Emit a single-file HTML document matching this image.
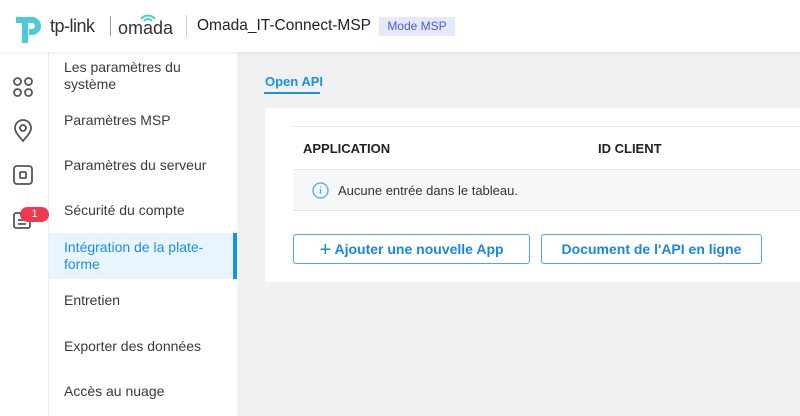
<!DOCTYPE html>
<html><head><meta charset="utf-8"><style>
*{margin:0;padding:0;box-sizing:border-box}
body{width:800px;height:416px;overflow:hidden;background:#f0f1f3;font-family:"Liberation Sans",sans-serif;position:relative;color:#333}
.hdr{position:absolute;left:0;top:0;width:800px;height:52px;background:#fff;box-shadow:0 2px 4px rgba(0,0,0,.06);z-index:2}
.rail{position:absolute;left:0;top:52px;width:49px;height:364px;background:#fff;border-right:1px solid #eee}
.menu{position:absolute;left:49px;top:52px;width:188px;height:364px;background:#fff}
.mi{position:absolute;left:15px;font-size:14px;color:#3a3a3a;line-height:17px}
.act{position:absolute;left:49px;top:233px;width:188px;height:46px;background:#e8f4fe;border-right:4px solid #1a8fe8}
.card{position:absolute;left:265px;top:108px;width:535px;height:174px;background:#fff}
.btn{position:absolute;top:234px;height:30px;border:1px solid #4aa8ef;border-radius:3px;background:#fff;color:#1a86dc;font-weight:bold;font-size:14px;line-height:28px;text-align:center}
</style></head><body>
<div class="hdr">
<svg style="position:absolute;left:14px;top:13px" width="32" height="32" viewBox="0 0 32 32"><path d="M8 4h10a9 9 0 0 1 0 18h-3v-6h3a3 3 0 0 0 0-6h-4v20h-6V10H2V4z" fill="#4acbd6"/></svg>
<div style="position:absolute;left:50px;top:16px;font-size:18px;color:#333;letter-spacing:-0.5px">tp-link</div>
<div style="position:absolute;left:110px;top:16px;width:1px;height:20px;background:#999"></div>
<div style="position:absolute;left:118px;top:18px;font-size:18px;color:#333">omada</div>
<svg style="position:absolute;left:138px;top:12px" width="20" height="10" viewBox="0 0 20 10"><path d="M3 7a9 9 0 0 1 14 0M6 9a5 5 0 0 1 8 0" stroke="#4acbd6" stroke-width="2" fill="none"/></svg>
<div style="position:absolute;left:186px;top:15px;width:1px;height:22px;background:#ccc"></div>
<div style="position:absolute;left:197px;top:17px;font-size:15.5px;color:#222;white-space:nowrap">Omada_IT-Connect-MSP</div>
<div style="position:absolute;left:379px;top:17px;width:76px;height:19px;background:#e6e9fb;color:#4b57d6;font-size:12px;line-height:19px;text-align:center">Mode MSP</div>
</div>
<div class="rail">
<svg style="position:absolute;left:12px;top:24px" width="22" height="22" viewBox="0 0 22 22" fill="none" stroke="#555" stroke-width="1.8"><rect x="2" y="2" width="7" height="7" rx="3.5"/><rect x="13" y="2" width="7" height="7" rx="3.5"/><rect x="2" y="13" width="7" height="7" rx="3.5"/><rect x="13" y="13" width="7" height="7" rx="3.5"/></svg>
<svg style="position:absolute;left:12px;top:67px" width="22" height="24" viewBox="0 0 22 24" fill="none" stroke="#555" stroke-width="1.8"><path d="M11 22c-5-6-8-9-8-13a8 8 0 0 1 16 0c0 4-3 7-8 13z"/><circle cx="11" cy="9" r="3"/></svg>
<svg style="position:absolute;left:12px;top:112px" width="22" height="22" viewBox="0 0 22 22" fill="none" stroke="#555" stroke-width="1.8"><rect x="2" y="2" width="18" height="18" rx="3"/><rect x="8" y="8" width="6" height="6" rx="1"/></svg>
<svg style="position:absolute;left:12px;top:158px" width="22" height="20" viewBox="0 0 22 20" fill="none" stroke="#555" stroke-width="1.8"><rect x="2" y="3" width="16" height="15" rx="2"/><path d="M6 10h8M6 14h8"/></svg>
<div style="position:absolute;left:20px;top:155px;width:29px;height:15px;background:#f0384e;border-radius:8px;color:#fff;font-size:11px;text-align:center;line-height:15px">1</div>
</div>
<div class="menu"></div>
<div class="act"></div>
<div class="mi" style="left:64px;top:59px">Les paramètres du<br>système</div>
<div class="mi" style="left:64px;top:112px">Paramètres MSP</div>
<div class="mi" style="left:64px;top:157px">Paramètres du serveur</div>
<div class="mi" style="left:64px;top:202px">Sécurité du compte</div>
<div class="mi" style="left:64px;top:239px;color:#1a8fe8">Intégration de la plate-<br>forme</div>
<div class="mi" style="left:64px;top:292px">Entretien</div>
<div class="mi" style="left:64px;top:338px">Exporter des données</div>
<div class="mi" style="left:64px;top:383px">Accès au nuage</div>
<div style="position:absolute;left:265px;top:74px;font-size:13px;font-weight:bold;color:#1a8fe8">Open API</div>
<div style="position:absolute;left:264px;top:92px;width:56px;height:2px;background:#1a8fe8"></div>
<div class="card"></div>
<div style="position:absolute;left:293px;top:126px;width:507px;height:1px;background:#e6e6e6"></div>
<div style="position:absolute;left:303px;top:141px;font-size:13px;font-weight:bold;color:#222">APPLICATION</div>
<div style="position:absolute;left:598px;top:141px;font-size:13px;font-weight:bold;color:#222">ID CLIENT</div>
<div style="position:absolute;left:293px;top:169px;width:507px;height:42px;background:#f6f7f9;border-top:1px solid #e6e6e6;border-bottom:1px solid #e6e6e6"></div>
<svg style="position:absolute;left:312px;top:182px" width="17" height="17" viewBox="0 0 17 17" fill="none" stroke="#4aa8ef" stroke-width="1.3"><circle cx="8.5" cy="8.5" r="7.5"/><path d="M8.5 7v5M8.5 4.5v1"/></svg>
<div style="position:absolute;left:338px;top:183px;font-size:13px;color:#333">Aucune entrée dans le tableau.</div>
<div class="btn" style="left:293px;width:237px"><span style="font-size:20px;font-weight:normal;vertical-align:-2px">+</span> Ajouter une nouvelle App</div>
<div class="btn" style="left:541px;width:221px">Document de l'API en ligne</div>
</body></html>
